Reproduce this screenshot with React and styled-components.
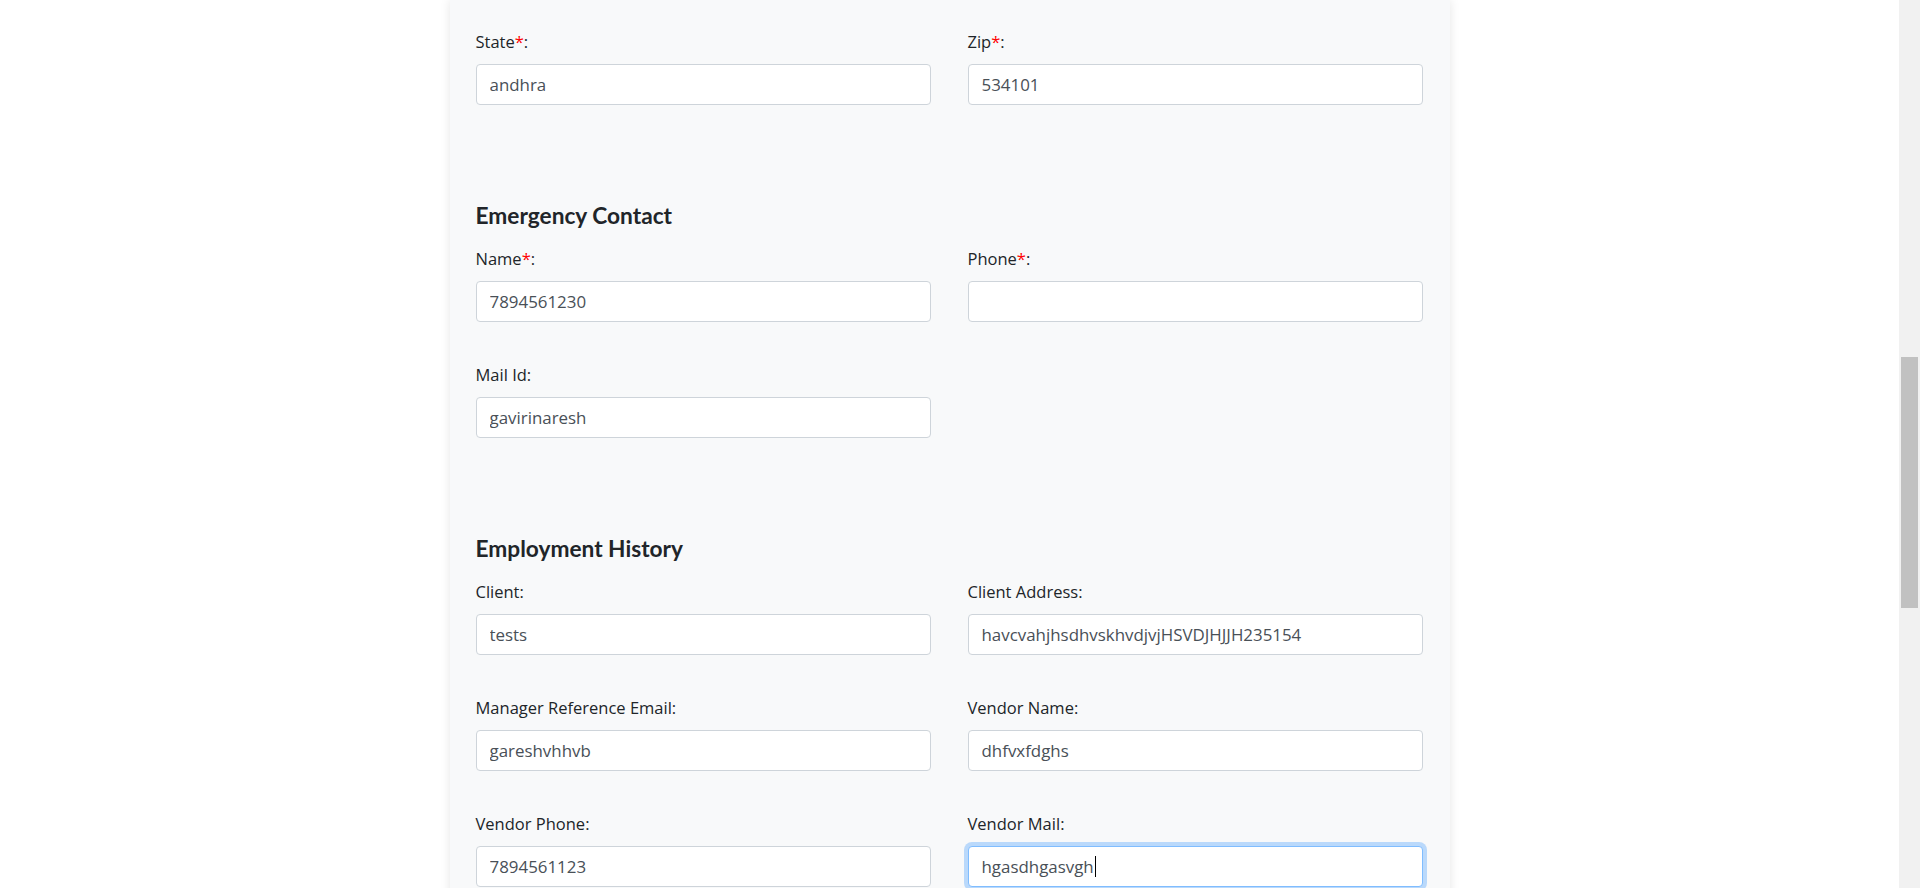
import React from "react";
import styled, { createGlobalStyle } from "styled-components";

const Global = createGlobalStyle`
  html, body { margin: 0; padding: 0; background: #ffffff; overflow: hidden; }
  body { font-family: "Open Sans", "Noto Sans", sans-serif; }
  * { box-sizing: border-box; }
`;

const Page = styled.div`
  display: flex;
  width: 100vw;
  height: 888px;
  overflow: hidden;
`;

const Main = styled.main`
  flex: 1;
  display: flex;
  justify-content: center;
  align-items: flex-start;
`;

const Card = styled.div`
  width: 1000px;
  min-height: 1000px;
  background: #f8f9fa;
  box-shadow: 0 0 10px rgba(0, 0, 0, 0.1);
  padding: 29px 27px 0 26px;
  display: flex;
  flex-direction: column;
  gap: 98px;
`;

const Section = styled.section`
  display: flex;
  flex-direction: column;
`;

const Heading = styled.h4`
  margin: 0 0 17px 0;
  font-family: Lato, "Open Sans", sans-serif;
  font-weight: 700;
  font-size: 22.7px;
  line-height: 26px;
  color: #212529;
`;

const Grid = styled.div`
  display: grid;
  grid-template-columns: 455px 455px;
  column-gap: 37px;
  row-gap: 40px;
`;

const Field = styled.div`
  display: flex;
  flex-direction: column;
`;

const Label = styled.label`
  font-size: 16.5px;
  line-height: 26px;
  margin-bottom: 9px;
  color: #212529;
`;

const Req = styled.span`
  color: #ff0000;
`;

const InputWrap = styled.div`
  position: relative;
  height: 41px;
`;

const Input = styled.input`
  height: 41px;
  width: 100%;
  padding: 0 13px;
  font-family: inherit;
  font-size: 16.9px;
  color: #495057;
  background: #ffffff;
  border: 1px solid ${(p) => (p.$focused ? "#80bdff" : "#ced4da")};
  border-radius: 4px;
  outline: none;
  box-shadow: ${(p) => (p.$focused ? "0 0 0 4px rgba(0, 123, 255, 0.25)" : "none")};
  caret-color: transparent;
`;

const Mirror = styled.div`
  position: absolute;
  inset: 0;
  padding: 0 14px;
  display: flex;
  align-items: center;
  font-size: 16.9px;
  color: transparent;
  pointer-events: none;
  white-space: pre;
`;

const Caret = styled.span`
  display: inline-block;
  width: 1px;
  height: 21px;
  margin-left: 1px;
  background: #000000;
`;

const Track = styled.div`
  width: 21px;
  height: 888px;
  background: #f1f1f1;
  flex-shrink: 0;
  display: flex;
  flex-direction: column;
  align-items: center;
`;

const Thumb = styled.div`
  margin-top: 357px;
  width: 17px;
  height: 251px;
  background: #c1c1c1;
`;

function FormField({ label, required, value, focused }) {
  return (
    <Field>
      <Label>
        {label}
        {required && <Req>*</Req>}:
      </Label>
      <InputWrap>
        <Input type="text" defaultValue={value} $focused={focused} readOnly />
        {focused && (
          <Mirror aria-hidden="true">
            {value}
            <Caret />
          </Mirror>
        )}
      </InputWrap>
    </Field>
  );
}

export default function App() {
  return (
    <>
      <Global />
      <Page>
        <Main>
          <Card>
            <Section>
              <Grid>
                <FormField label="State" required value="andhra" />
                <FormField label="Zip" required value="534101" />
              </Grid>
            </Section>
            <Section>
              <Heading>Emergency Contact</Heading>
              <Grid>
                <FormField label="Name" required value="7894561230" />
                <FormField label="Phone" required value="" />
                <FormField label="Mail Id" value="gavirinaresh" />
              </Grid>
            </Section>
            <Section>
              <Heading>Employment History</Heading>
              <Grid>
                <FormField label="Client" value="tests" />
                <FormField label="Client Address" value="havcvahjhsdhvskhvdjvjHSVDJHJJH235154" />
                <FormField label="Manager Reference Email" value="gareshvhhvb" />
                <FormField label="Vendor Name" value="dhfvxfdghs" />
                <FormField label="Vendor Phone" value="7894561123" />
                <FormField label="Vendor Mail" value="hgasdhgasvgh" focused />
              </Grid>
            </Section>
          </Card>
        </Main>
        <Track>
          <Thumb />
        </Track>
      </Page>
    </>
  );
}
